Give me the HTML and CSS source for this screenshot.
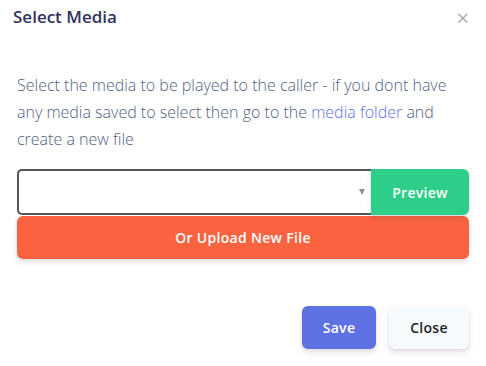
FILE: index.html
```html
<!DOCTYPE html>
<html lang="en">
<head>
    <meta charset="UTF-8">
    <title>Select Media</title>
    <link rel="stylesheet" href="styles.css">
</head>
<body>
    <div class="modal">
        <div class="modal-header">
            <h5 class="modal-title">Select Media</h5>
            <button class="close">&times;</button>
        </div>
        <div class="modal-body">
            <p class="info">Select the media to be played to the caller - if you dont have any media saved to select then go to the <a href="#">media folder</a> and create a new file</p>
            <div class="input-group">
                <div class="select-box">
                    <span class="caret"></span>
                </div>
                <button class="btn btn-success">Preview</button>
            </div>
            <button class="btn btn-warning btn-block">Or Upload New File</button>
        </div>
        <div class="modal-footer">
            <button class="btn btn-primary">Save</button>
            <button class="btn btn-secondary">Close</button>
        </div>
    </div>
</body>
</html>
```
FILE: styles.css
```css
body{
    margin: 0;
    background: #fff;
    font-family: "Open Sans", "Liberation Sans", sans-serif;
}
.modal{
    width: 486px;
    height: 366px;
}
.modal-header{
    display: flex;
    justify-content: space-between;
    align-items: flex-start;
    padding: 6px 17px 0 13px;
}
.modal-title{
    margin: 0;
    font-size: 17px;
    font-weight: 600;
    color: #32325d;
    line-height: 22px;
}
.close{
    border: none;
    background: none;
    padding: 0;
    margin-top: 0;
    font-size: 22px;
    line-height: 22px;
    color: #aeaeae;
    font-family: "Open Sans", sans-serif;
}
.modal-body{
    padding: 44px 17px 0 17px;
}
.info{
    margin: 0 0 16px 0;
    font-size: 16px;
    font-weight: 300;
    line-height: 27px;
    color: #525f7f;
}
.info a{
    color: #5e72e4;
    text-decoration: none;
}
.input-group{
    display: flex;
    height: 46px;
}
.select-box{
    flex: 1;
    border: 2px solid #555;
    border-radius: 5px 0 0 5px;
    border-right: none;
    position: relative;
}
.caret{
    position: absolute;
    right: 6px;
    top: 18px;
    border-left: 3px solid transparent;
    border-right: 3px solid transparent;
    border-top: 6px solid #8a91a5;
}
.btn{
    border: none;
    font-family: "Open Sans", sans-serif;
    font-size: 14px;
    font-weight: 600;
    letter-spacing: 0.3px;
    border-radius: 6px;
    box-shadow: 0 4px 6px rgba(50,50,93,.11), 0 1px 3px rgba(0,0,0,.08);
}
.btn-success{
    width: 98px;
    background: #2dce89;
    color: #fff;
    border-radius: 0 6px 6px 0;
}
.btn-warning{
    background: #fb6340;
    color: #fff;
}
.btn-block{
    display: block;
    width: 100%;
    height: 43px;
    margin-top: 1px;
}
.modal-footer{
    display: flex;
    justify-content: flex-end;
    gap: 13px;
    padding: 47px 17px 0 0;
}
.btn-primary{
    width: 74px;
    height: 43px;
    background: #5e72e4;
    color: #fff;
}
.btn-secondary{
    width: 80px;
    height: 43px;
    background: #f7fafc;
    color: #212529;
}
```
